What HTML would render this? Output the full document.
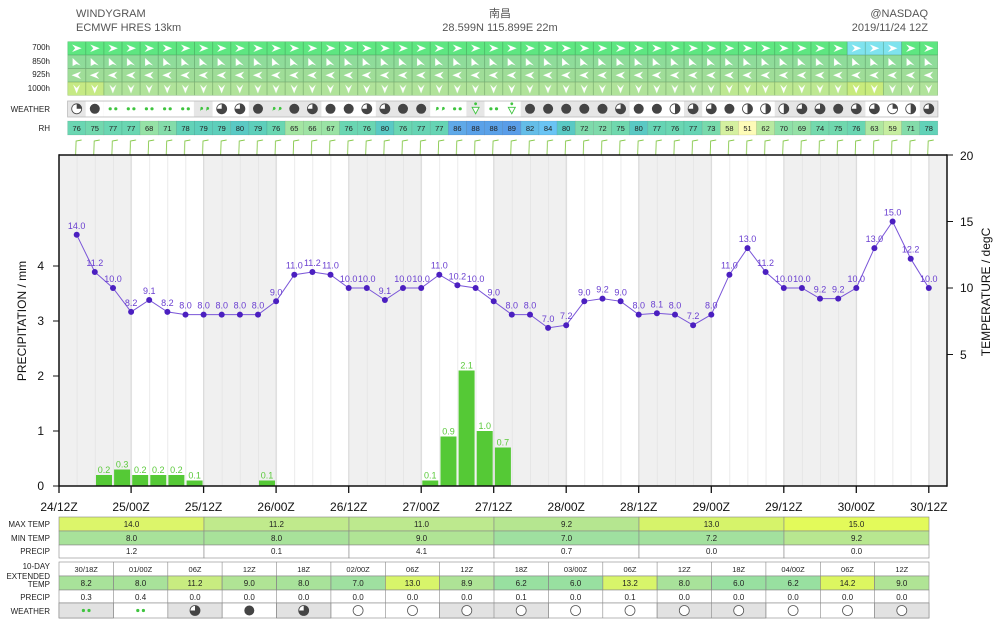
<!DOCTYPE html>
<html><head><meta charset="utf-8"><style>
html,body{margin:0;padding:0;background:#fff}
svg{display:block;font-family:"Liberation Sans","Noto Sans CJK SC",sans-serif}
</style></head><body>
<svg width="1000" height="625" viewBox="0 0 1000 625" xmlns="http://www.w3.org/2000/svg">
<defs>
<pattern id="vg" x="58.6" y="0" width="18.13" height="10" patternUnits="userSpaceOnUse"><line x1="0.3" y1="0" x2="0.3" y2="10" stroke="#e2e2e2" stroke-width="0.8"/></pattern>
<pattern id="cellgrid" x="67.6" y="41.5" width="18.13" height="13.5" patternUnits="userSpaceOnUse"><rect x="0" y="0" width="18.13" height="13.5" fill="none" stroke="rgba(40,90,50,0.35)" stroke-width="0.8"/></pattern>
<pattern id="a700" x="67.6" y="41.5" width="18.13" height="13.5" patternUnits="userSpaceOnUse"><path d="M4.5,3 L14,6.75 L4.5,10.5 L7.5,6.75Z" fill="#fff"/></pattern>
<pattern id="a850" x="67.6" y="55" width="18.13" height="13.5" patternUnits="userSpaceOnUse"><path d="M5,3 L13,10.5 L9,9 L5,11Z M5,3 L9,4" fill="#fff"/></pattern>
<pattern id="a925" x="67.6" y="68.5" width="18.13" height="13.5" patternUnits="userSpaceOnUse"><path d="M4,6.75 L13.5,3 L10.5,6.75 L13.5,10.5Z" fill="#fff"/></pattern>
<pattern id="a1000" x="67.6" y="82" width="18.13" height="13.5" patternUnits="userSpaceOnUse"><path d="M5.5,2.5 L9,11.5 L12.5,2.5 L9,6Z" fill="#fff"/></pattern>
<pattern id="barb" x="67.6" y="138" width="18.13" height="17" patternUnits="userSpaceOnUse"><path d="M8,17 L8.5,3 L14,2" fill="none" stroke="#86c84a" stroke-width="0.9"/></pattern>
<g id="wD"><circle r="5" fill="#444"/></g>
<g id="wH"><circle r="5" fill="#fff" stroke="#444" stroke-width="0.8"/><path d="M0,0 L0,-5 A5,5 0 1,1 -5,0Z" fill="#444"/></g>
<g id="wS"><circle r="5" fill="#fff" stroke="#444" stroke-width="0.8"/><path d="M0,-5 A5,5 0 0,1 0,5Z" fill="#444"/></g>
<g id="wP"><circle r="5" fill="#fff" stroke="#444" stroke-width="0.8"/><path d="M0,0 L0,-5 A5,5 0 0,1 5,0Z" fill="#444"/></g>
<g id="wR"><circle cx="-2.8" r="1.6" fill="#3fc43f"/><circle cx="2.8" r="1.6" fill="#3fc43f"/></g>
<g id="wQ"><path d="M-3,-1.5 a1.5,1.5 0 1,1 0.5,2.5 l-1,1.5Z M3,-1.5 a1.5,1.5 0 1,1 0.5,2.5 l-1,1.5Z" fill="#3fc43f"/></g>
<g id="wT"><circle cy="-5" r="1.4" fill="#3fc43f"/><path d="M-3.5,-1.5 L3.5,-1.5 L0,5Z" fill="#fff" stroke="#3fc43f" stroke-width="0.9"/></g>
<g id="wO"><circle r="5" fill="#fff" stroke="#555" stroke-width="0.8"/></g>
</defs>

<!-- header -->
<g fill="#555" font-size="11">
<text x="76" y="17">WINDYGRAM</text>
<text x="76" y="31">ECMWF HRES 13km</text>
<text x="500" y="17" text-anchor="middle">南昌</text>
<text x="500" y="31" text-anchor="middle">28.599N 115.899E 22m</text>
<text x="928" y="17" text-anchor="end">@NASDAQ</text>
<text x="928" y="31" text-anchor="end">2019/11/24 12Z</text>
</g>

<!-- left labels -->
<g fill="#222" font-size="8" text-anchor="end">
<text x="50" y="50">700h</text><text x="50" y="64">850h</text><text x="50" y="77">925h</text><text x="50" y="91">1000h</text>
<text x="50" y="112">WEATHER</text><text x="50" y="131">RH</text>
</g>

<!-- wind block -->
<rect x="67.6" y="41.5" width="870.3" height="13.5" fill="#5ee681"/>
<rect x="847.2" y="41.5" width="54.4" height="13.5" fill="#7fe3ee"/>
<rect x="67.6" y="55" width="870.3" height="13.5" fill="#8fdc9a"/>
<rect x="67.6" y="68.5" width="870.3" height="13.5" fill="#9fdd98"/>
<rect x="67.6" y="82" width="870.3" height="13.5" fill="#b0e39a"/>
<rect x="67.6" y="82" width="36" height="13.5" fill="#c6ea84"/>
<rect x="720" y="82" width="145" height="13.5" fill="#bde891"/>
<rect x="847.2" y="82" width="36" height="13.5" fill="#c8eb7c"/>
<rect x="67.6" y="41.5" width="870.3" height="13.5" fill="url(#a700)"/>
<rect x="67.6" y="55" width="870.3" height="13.5" fill="url(#a850)"/>
<rect x="67.6" y="68.5" width="870.3" height="13.5" fill="url(#a925)"/>
<rect x="67.6" y="82" width="870.3" height="13.5" fill="url(#a1000)"/>
<rect x="67.6" y="41.5" width="870.3" height="54" fill="url(#cellgrid)"/>

<!-- weather row -->
<rect x="67.6" y="101" width="870.3" height="16" fill="#e6e6e6" stroke="#bbb" stroke-width="0.8"/>
<g fill="#fff">
<rect x="85.7" y="101.5" width="18.1" height="15"/><rect x="103.9" y="101.5" width="90" height="15"/><rect x="212.6" y="101.5" width="36.2" height="15"/><rect x="321.4" y="101.5" width="54.4" height="15"/><rect x="430.2" y="101.5" width="36.2" height="15"/><rect x="484.5" y="101.5" width="36.2" height="15"/><rect x="629.6" y="101.5" width="54.4" height="15"/><rect x="702.2" y="101.5" width="72.5" height="15"/><rect x="865.4" y="101.5" width="54.4" height="15"/>
</g>
<g transform="translate(0,108.8)">
<use href="#wP" x="76.7"/><use href="#wD" x="94.8"/><use href="#wR" x="113.0"/><use href="#wR" x="131.1"/><use href="#wR" x="149.2"/><use href="#wR" x="167.4"/><use href="#wR" x="185.5"/><use href="#wQ" x="203.6"/><use href="#wH" x="221.7"/><use href="#wH" x="239.9"/><use href="#wD" x="258.0"/><use href="#wQ" x="276.1"/><use href="#wD" x="294.3"/><use href="#wH" x="312.4"/><use href="#wD" x="330.5"/><use href="#wD" x="348.7"/><use href="#wH" x="366.8"/><use href="#wH" x="384.9"/><use href="#wD" x="403.0"/><use href="#wD" x="421.2"/><use href="#wQ" x="439.3"/><use href="#wR" x="457.4"/><use href="#wT" x="475.6"/><use href="#wR" x="493.7"/><use href="#wT" x="511.8"/><use href="#wD" x="530.0"/><use href="#wD" x="548.1"/><use href="#wD" x="566.2"/><use href="#wD" x="584.3"/><use href="#wD" x="602.5"/><use href="#wH" x="620.6"/><use href="#wD" x="638.7"/><use href="#wD" x="656.9"/><use href="#wS" x="675.0"/><use href="#wH" x="693.1"/><use href="#wH" x="711.3"/><use href="#wD" x="729.4"/><use href="#wS" x="747.5"/><use href="#wS" x="765.6"/><use href="#wS" x="783.8"/><use href="#wH" x="801.9"/><use href="#wH" x="820.0"/><use href="#wD" x="838.2"/><use href="#wH" x="856.3"/><use href="#wH" x="874.4"/><use href="#wP" x="892.6"/><use href="#wS" x="910.7"/><use href="#wH" x="928.8"/>
</g>

<!-- RH row -->
<g stroke="rgba(0,0,0,0.15)" stroke-width="0.5">
<rect x="67.6" y="121" width="18.13" height="14" fill="#6ad6b2"/><rect x="85.7" y="121" width="18.13" height="14" fill="#72d8ae"/><rect x="103.9" y="121" width="18.13" height="14" fill="#6ad6b2"/><rect x="122.0" y="121" width="18.13" height="14" fill="#6ad6b2"/><rect x="140.1" y="121" width="18.13" height="14" fill="#96e2a6"/><rect x="158.3" y="121" width="18.13" height="14" fill="#84dcaa"/><rect x="176.4" y="121" width="18.13" height="14" fill="#62d2b8"/><rect x="194.5" y="121" width="18.13" height="14" fill="#5ecfbb"/><rect x="212.6" y="121" width="18.13" height="14" fill="#5ecfbb"/><rect x="230.8" y="121" width="18.13" height="14" fill="#5ac9c4"/><rect x="248.9" y="121" width="18.13" height="14" fill="#5ecfbb"/><rect x="267.0" y="121" width="18.13" height="14" fill="#6ad6b2"/><rect x="285.2" y="121" width="18.13" height="14" fill="#a4e5a2"/><rect x="303.3" y="121" width="18.13" height="14" fill="#9ee3a4"/><rect x="321.4" y="121" width="18.13" height="14" fill="#9ae3a5"/><rect x="339.6" y="121" width="18.13" height="14" fill="#6ad6b2"/><rect x="357.7" y="121" width="18.13" height="14" fill="#6ad6b2"/><rect x="375.8" y="121" width="18.13" height="14" fill="#5ac9c4"/><rect x="393.9" y="121" width="18.13" height="14" fill="#6ad6b2"/><rect x="412.1" y="121" width="18.13" height="14" fill="#66d4b4"/><rect x="430.2" y="121" width="18.13" height="14" fill="#66d4b4"/><rect x="448.3" y="121" width="18.13" height="14" fill="#5fa9e8"/><rect x="466.5" y="121" width="18.13" height="14" fill="#5aa1e8"/><rect x="484.6" y="121" width="18.13" height="14" fill="#5aa1e8"/><rect x="502.7" y="121" width="18.13" height="14" fill="#5a9de8"/><rect x="520.9" y="121" width="18.13" height="14" fill="#64bde8"/><rect x="539.0" y="121" width="18.13" height="14" fill="#6ac4f4"/><rect x="557.1" y="121" width="18.13" height="14" fill="#5ac9c4"/><rect x="575.2" y="121" width="18.13" height="14" fill="#7edaab"/><rect x="593.4" y="121" width="18.13" height="14" fill="#7edaab"/><rect x="611.5" y="121" width="18.13" height="14" fill="#70d8ae"/><rect x="629.6" y="121" width="18.13" height="14" fill="#5ac9c4"/><rect x="647.8" y="121" width="18.13" height="14" fill="#66d4b4"/><rect x="665.9" y="121" width="18.13" height="14" fill="#6ad6b2"/><rect x="684.0" y="121" width="18.13" height="14" fill="#66d4b4"/><rect x="702.2" y="121" width="18.13" height="14" fill="#78daac"/><rect x="720.3" y="121" width="18.13" height="14" fill="#d5f0a0"/><rect x="738.4" y="121" width="18.13" height="14" fill="#fdfbb8"/><rect x="756.5" y="121" width="18.13" height="14" fill="#b8e9a0"/><rect x="774.7" y="121" width="18.13" height="14" fill="#8ee0a8"/><rect x="792.8" y="121" width="18.13" height="14" fill="#94e1a6"/><rect x="810.9" y="121" width="18.13" height="14" fill="#74d9ad"/><rect x="829.1" y="121" width="18.13" height="14" fill="#70d8ae"/><rect x="847.2" y="121" width="18.13" height="14" fill="#6ad6b2"/><rect x="865.3" y="121" width="18.13" height="14" fill="#b0e7a0"/><rect x="883.5" y="121" width="18.13" height="14" fill="#c6eda0"/><rect x="901.6" y="121" width="18.13" height="14" fill="#84dcaa"/><rect x="919.7" y="121" width="18.13" height="14" fill="#62d2b8"/>
</g>
<g font-size="7.5" fill="#222" text-anchor="middle" transform="translate(0,131)">
<text x="76.7">76</text><text x="94.8">75</text><text x="113.0">77</text><text x="131.1">77</text><text x="149.2">68</text><text x="167.4">71</text><text x="185.5">78</text><text x="203.6">79</text><text x="221.7">79</text><text x="239.9">80</text><text x="258.0">79</text><text x="276.1">76</text><text x="294.3">65</text><text x="312.4">66</text><text x="330.5">67</text><text x="348.7">76</text><text x="366.8">76</text><text x="384.9">80</text><text x="403.0">76</text><text x="421.2">77</text><text x="439.3">77</text><text x="457.4">86</text><text x="475.6">88</text><text x="493.7">88</text><text x="511.8">89</text><text x="530.0">82</text><text x="548.1">84</text><text x="566.2">80</text><text x="584.3">72</text><text x="602.5">72</text><text x="620.6">75</text><text x="638.7">80</text><text x="656.9">77</text><text x="675.0">76</text><text x="693.1">77</text><text x="711.3">73</text><text x="729.4">58</text><text x="747.5">51</text><text x="765.6">62</text><text x="783.8">70</text><text x="801.9">69</text><text x="820.0">74</text><text x="838.2">75</text><text x="856.3">76</text><text x="874.4">63</text><text x="892.6">59</text><text x="910.7">71</text><text x="928.8">78</text>
</g>

<!-- barbs -->
<rect x="67.6" y="138" width="870.3" height="17" fill="url(#barb)"/>

<!-- chart background -->
<g fill="#f0f0f0">
<rect x="59" y="155" width="72.3" height="331"/><rect x="203.6" y="155" width="72.5" height="331"/><rect x="348.7" y="155" width="72.5" height="331"/><rect x="493.7" y="155" width="72.5" height="331"/><rect x="638.7" y="155" width="72.5" height="331"/><rect x="783.8" y="155" width="72.5" height="331"/><rect x="928.8" y="155" width="18.2" height="331"/>
</g>
<rect x="59" y="155" width="888" height="331" fill="url(#vg)"/>
<g stroke="#d8d8d8" stroke-width="1"><line x1="131.1" y1="155" x2="131.1" y2="486"/><line x1="203.6" y1="155" x2="203.6" y2="486"/><line x1="276.1" y1="155" x2="276.1" y2="486"/><line x1="348.7" y1="155" x2="348.7" y2="486"/><line x1="421.2" y1="155" x2="421.2" y2="486"/><line x1="493.7" y1="155" x2="493.7" y2="486"/><line x1="566.2" y1="155" x2="566.2" y2="486"/><line x1="638.7" y1="155" x2="638.7" y2="486"/><line x1="711.3" y1="155" x2="711.3" y2="486"/><line x1="783.8" y1="155" x2="783.8" y2="486"/><line x1="856.3" y1="155" x2="856.3" y2="486"/><line x1="928.8" y1="155" x2="928.8" y2="486"/></g>

<!-- bars -->
<g fill="#55c936">
<rect x="96" y="475" width="16" height="11"/><rect x="114.1" y="469.5" width="16" height="16.5"/><rect x="132.2" y="475" width="16" height="11"/><rect x="150.3" y="475" width="16" height="11"/><rect x="168.4" y="475" width="16" height="11"/><rect x="186.6" y="480.5" width="16" height="5.5"/><rect x="259" y="480.5" width="16" height="5.5"/><rect x="422.3" y="480.5" width="16" height="5.5"/><rect x="440.5" y="436.5" width="16" height="49.5"/><rect x="458.6" y="370.5" width="16" height="115.5"/><rect x="476.7" y="431" width="16" height="55"/><rect x="494.9" y="447.5" width="16" height="38.5"/>
</g>
<g fill="#5ac93a" font-size="9" text-anchor="middle">
<text x="104" y="473">0.2</text><text x="122.1" y="467.5">0.3</text><text x="140.2" y="473">0.2</text><text x="158.3" y="473">0.2</text><text x="176.4" y="473">0.2</text><text x="194.6" y="478.5">0.1</text><text x="267" y="478.5">0.1</text><text x="430.3" y="478.5">0.1</text><text x="448.5" y="434.5">0.9</text><text x="466.6" y="368.5">2.1</text><text x="484.7" y="429">1.0</text><text x="502.9" y="445.5">0.7</text>
</g>

<!-- temperature line -->
<polyline fill="none" stroke="#7a55d8" stroke-width="1" points="76.7,234.8 94.8,272 113,288 131.1,311.9 149.2,300 167.4,311.9 185.5,314.6 203.6,314.6 221.7,314.6 239.9,314.6 258,314.6 276.1,301.3 294.3,274.7 312.4,272 330.5,274.7 348.7,288 366.8,288 384.9,300 403,288 421.2,288 439.3,274.7 457.4,285.3 475.6,288 493.7,301.3 511.8,314.6 530,314.6 548.1,327.9 566.2,325.2 584.3,301.3 602.5,298.6 620.6,301.3 638.7,314.6 656.9,313.3 675,314.6 693.1,325.2 711.3,314.6 729.4,274.7 747.5,248.1 765.6,272 783.8,288 801.9,288 820,298.6 838.2,298.6 856.3,288 874.4,248.1 892.6,221.5 910.7,258.7 928.8,288"/>
<g fill="#4b1fc0">
<circle cx="76.7" cy="234.8" r="3"/><circle cx="94.8" cy="272" r="3"/><circle cx="113" cy="288" r="3"/><circle cx="131.1" cy="311.9" r="3"/><circle cx="149.2" cy="300" r="3"/><circle cx="167.4" cy="311.9" r="3"/><circle cx="185.5" cy="314.6" r="3"/><circle cx="203.6" cy="314.6" r="3"/><circle cx="221.7" cy="314.6" r="3"/><circle cx="239.9" cy="314.6" r="3"/><circle cx="258" cy="314.6" r="3"/><circle cx="276.1" cy="301.3" r="3"/><circle cx="294.3" cy="274.7" r="3"/><circle cx="312.4" cy="272" r="3"/><circle cx="330.5" cy="274.7" r="3"/><circle cx="348.7" cy="288" r="3"/><circle cx="366.8" cy="288" r="3"/><circle cx="384.9" cy="300" r="3"/><circle cx="403" cy="288" r="3"/><circle cx="421.2" cy="288" r="3"/><circle cx="439.3" cy="274.7" r="3"/><circle cx="457.4" cy="285.3" r="3"/><circle cx="475.6" cy="288" r="3"/><circle cx="493.7" cy="301.3" r="3"/><circle cx="511.8" cy="314.6" r="3"/><circle cx="530" cy="314.6" r="3"/><circle cx="548.1" cy="327.9" r="3"/><circle cx="566.2" cy="325.2" r="3"/><circle cx="584.3" cy="301.3" r="3"/><circle cx="602.5" cy="298.6" r="3"/><circle cx="620.6" cy="301.3" r="3"/><circle cx="638.7" cy="314.6" r="3"/><circle cx="656.9" cy="313.3" r="3"/><circle cx="675" cy="314.6" r="3"/><circle cx="693.1" cy="325.2" r="3"/><circle cx="711.3" cy="314.6" r="3"/><circle cx="729.4" cy="274.7" r="3"/><circle cx="747.5" cy="248.1" r="3"/><circle cx="765.6" cy="272" r="3"/><circle cx="783.8" cy="288" r="3"/><circle cx="801.9" cy="288" r="3"/><circle cx="820" cy="298.6" r="3"/><circle cx="838.2" cy="298.6" r="3"/><circle cx="856.3" cy="288" r="3"/><circle cx="874.4" cy="248.1" r="3"/><circle cx="892.6" cy="221.5" r="3"/><circle cx="910.7" cy="258.7" r="3"/><circle cx="928.8" cy="288" r="3"/>
</g>
<g fill="#6a3fd0" font-size="9" text-anchor="middle">
<text x="76.7" y="228.8">14.0</text><text x="94.8" y="266">11.2</text><text x="113" y="282">10.0</text><text x="131.1" y="305.9">8.2</text><text x="149.2" y="294">9.1</text><text x="167.4" y="305.9">8.2</text><text x="185.5" y="308.6">8.0</text><text x="203.6" y="308.6">8.0</text><text x="221.7" y="308.6">8.0</text><text x="239.9" y="308.6">8.0</text><text x="258" y="308.6">8.0</text><text x="276.1" y="295.3">9.0</text><text x="294.3" y="268.7">11.0</text><text x="312.4" y="266">11.2</text><text x="330.5" y="268.7">11.0</text><text x="348.7" y="282">10.0</text><text x="366.8" y="282">10.0</text><text x="384.9" y="294">9.1</text><text x="403" y="282">10.0</text><text x="421.2" y="282">10.0</text><text x="439.3" y="268.7">11.0</text><text x="457.4" y="279.3">10.2</text><text x="475.6" y="282">10.0</text><text x="493.7" y="295.3">9.0</text><text x="511.8" y="308.6">8.0</text><text x="530" y="308.6">8.0</text><text x="548.1" y="321.9">7.0</text><text x="566.2" y="319.2">7.2</text><text x="584.3" y="295.3">9.0</text><text x="602.5" y="292.6">9.2</text><text x="620.6" y="295.3">9.0</text><text x="638.7" y="308.6">8.0</text><text x="656.9" y="307.3">8.1</text><text x="675" y="308.6">8.0</text><text x="693.1" y="319.2">7.2</text><text x="711.3" y="308.6">8.0</text><text x="729.4" y="268.7">11.0</text><text x="747.5" y="242.1">13.0</text><text x="765.6" y="266">11.2</text><text x="783.8" y="282">10.0</text><text x="801.9" y="282">10.0</text><text x="820" y="292.6">9.2</text><text x="838.2" y="292.6">9.2</text><text x="856.3" y="282">10.0</text><text x="874.4" y="242.1">13.0</text><text x="892.6" y="215.5">15.0</text><text x="910.7" y="252.7">12.2</text><text x="928.8" y="282">10.0</text>
</g>

<!-- axes -->
<g stroke="#111" stroke-width="1.5" fill="none">
<line x1="59" y1="155" x2="947" y2="155"/>
<line x1="59" y1="154.3" x2="59" y2="486.7"/>
<line x1="947" y1="154.3" x2="947" y2="486.7"/>
<line x1="59" y1="486" x2="947" y2="486"/>
</g>
<g stroke="#111" stroke-width="1">
<line x1="53" y1="266" x2="59" y2="266"/><line x1="53" y1="321" x2="59" y2="321"/><line x1="53" y1="376" x2="59" y2="376"/><line x1="53" y1="431" x2="59" y2="431"/><line x1="53" y1="486" x2="59" y2="486"/>
<line x1="947" y1="155" x2="953" y2="155"/><line x1="947" y1="221.5" x2="953" y2="221.5"/><line x1="947" y1="288" x2="953" y2="288"/><line x1="947" y1="354.5" x2="953" y2="354.5"/>
</g>
<g stroke="#111" stroke-width="1.3">
<line x1="59" y1="486" x2="59" y2="493"/><line x1="131.1" y1="486" x2="131.1" y2="493"/><line x1="203.6" y1="486" x2="203.6" y2="493"/><line x1="276.1" y1="486" x2="276.1" y2="493"/><line x1="348.7" y1="486" x2="348.7" y2="493"/><line x1="421.2" y1="486" x2="421.2" y2="493"/><line x1="493.7" y1="486" x2="493.7" y2="493"/><line x1="566.2" y1="486" x2="566.2" y2="493"/><line x1="638.7" y1="486" x2="638.7" y2="493"/><line x1="711.3" y1="486" x2="711.3" y2="493"/><line x1="783.8" y1="486" x2="783.8" y2="493"/><line x1="856.3" y1="486" x2="856.3" y2="493"/><line x1="928.8" y1="486" x2="928.8" y2="493"/>
</g>
<g font-size="12" fill="#111">
<text x="44" y="270" text-anchor="end">4</text><text x="44" y="325" text-anchor="end">3</text><text x="44" y="380" text-anchor="end">2</text><text x="44" y="435" text-anchor="end">1</text><text x="44" y="490" text-anchor="end">0</text>
<text x="960" y="160">20</text><text x="960" y="226">15</text><text x="960" y="292">10</text><text x="960" y="359">5</text>
<text transform="translate(26,321) rotate(-90)" text-anchor="middle">PRECIPITATION / mm</text>
<text transform="translate(990,292) rotate(-90)" text-anchor="middle">TEMPERATURE / degC</text>
</g>
<g font-size="12" fill="#111" text-anchor="middle">
<text x="59" y="511">24/12Z</text><text x="131.1" y="511">25/00Z</text><text x="203.6" y="511">25/12Z</text><text x="276.1" y="511">26/00Z</text><text x="348.7" y="511">26/12Z</text><text x="421.2" y="511">27/00Z</text><text x="493.7" y="511">27/12Z</text><text x="566.2" y="511">28/00Z</text><text x="638.7" y="511">28/12Z</text><text x="711.3" y="511">29/00Z</text><text x="783.8" y="511">29/12Z</text><text x="856.3" y="511">30/00Z</text><text x="928.8" y="511">30/12Z</text>
</g>

<!-- summary table -->
<g font-size="8" fill="#222" text-anchor="end">
<text x="50" y="527">MAX TEMP</text><text x="50" y="541">MIN TEMP</text><text x="50" y="554">PRECIP</text>
<text x="50" y="569">10-DAY</text><text x="50" y="579">EXTENDED</text><text x="50" y="587">TEMP</text><text x="50" y="600">PRECIP</text><text x="50" y="614">WEATHER</text>
</g>
<g stroke="#888" stroke-width="0.6">
<rect x="59" y="517" width="145" height="14" fill="#dcf56a"/><rect x="204" y="517" width="145" height="14" fill="#c0ea8c"/><rect x="349" y="517" width="145" height="14" fill="#bde98e"/><rect x="494" y="517" width="145" height="14" fill="#b5e690"/><rect x="639" y="517" width="145" height="14" fill="#d6f36a"/><rect x="784" y="517" width="145" height="14" fill="#e3fa5a"/>
<rect x="59" y="531" width="145" height="14" fill="#a8e29a"/><rect x="204" y="531" width="145" height="14" fill="#a8e29a"/><rect x="349" y="531" width="145" height="14" fill="#b0e495"/><rect x="494" y="531" width="145" height="14" fill="#9fe0a0"/><rect x="639" y="531" width="145" height="14" fill="#a3e19e"/><rect x="784" y="531" width="145" height="14" fill="#b8e790"/>
<rect x="59" y="545" width="145" height="13" fill="#fff"/><rect x="204" y="545" width="145" height="13" fill="#fff"/><rect x="349" y="545" width="145" height="13" fill="#fff"/><rect x="494" y="545" width="145" height="13" fill="#fff"/><rect x="639" y="545" width="145" height="13" fill="#fff"/><rect x="784" y="545" width="145" height="13" fill="#fff"/>
</g>
<g font-size="8" fill="#222" text-anchor="middle">
<text x="131.5" y="527">14.0</text><text x="276.5" y="527">11.2</text><text x="421.5" y="527">11.0</text><text x="566.5" y="527">9.2</text><text x="711.5" y="527">13.0</text><text x="856.5" y="527">15.0</text>
<text x="131.5" y="541">8.0</text><text x="276.5" y="541">8.0</text><text x="421.5" y="541">9.0</text><text x="566.5" y="541">7.0</text><text x="711.5" y="541">7.2</text><text x="856.5" y="541">9.2</text>
<text x="131.5" y="554">1.2</text><text x="276.5" y="554">0.1</text><text x="421.5" y="554">4.1</text><text x="566.5" y="554">0.7</text><text x="711.5" y="554">0.0</text><text x="856.5" y="554">0.0</text>
</g>

<!-- extended table -->
<g stroke="#888" stroke-width="0.6">
<rect x="59" y="562" width="870" height="14" fill="#fff"/>
<rect x="59" y="576" width="54.4" height="14" fill="#a8e29a"/><rect x="113.4" y="576" width="54.4" height="14" fill="#a8e29a"/><rect x="167.8" y="576" width="54.4" height="14" fill="#c8ec80"/><rect x="222.1" y="576" width="54.4" height="14" fill="#b0e495"/><rect x="276.5" y="576" width="54.4" height="14" fill="#a8e29a"/><rect x="330.9" y="576" width="54.4" height="14" fill="#9fe0a0"/><rect x="385.3" y="576" width="54.4" height="14" fill="#d8f56a"/><rect x="439.6" y="576" width="54.4" height="14" fill="#aee396"/><rect x="494" y="576" width="54.4" height="14" fill="#98e0a0"/><rect x="548.4" y="576" width="54.4" height="14" fill="#98e0a0"/><rect x="602.8" y="576" width="54.4" height="14" fill="#d8f56a"/><rect x="657.1" y="576" width="54.4" height="14" fill="#a8e29a"/><rect x="711.5" y="576" width="54.4" height="14" fill="#98e0a0"/><rect x="765.9" y="576" width="54.4" height="14" fill="#98e0a0"/><rect x="820.3" y="576" width="54.4" height="14" fill="#dcf660"/><rect x="874.6" y="576" width="54.4" height="14" fill="#b0e495"/>
<rect x="59" y="590" width="870" height="13" fill="#fff"/>
<rect x="59" y="603" width="870" height="15" fill="#fff"/>
<rect x="59" y="603" width="54.4" height="15" fill="#e2e2e2"/><rect x="167.8" y="603" width="54.4" height="15" fill="#e2e2e2"/><rect x="276.5" y="603" width="54.4" height="15" fill="#e2e2e2"/><rect x="439.6" y="603" width="108.8" height="15" fill="#e2e2e2"/><rect x="657.1" y="603" width="108.8" height="15" fill="#e2e2e2"/><rect x="874.6" y="603" width="54.4" height="15" fill="#e2e2e2"/>
<line x1="113.4" y1="562" x2="113.4" y2="618"/><line x1="167.8" y1="562" x2="167.8" y2="618"/><line x1="222.1" y1="562" x2="222.1" y2="618"/><line x1="276.5" y1="562" x2="276.5" y2="618"/><line x1="330.9" y1="562" x2="330.9" y2="618"/><line x1="385.3" y1="562" x2="385.3" y2="618"/><line x1="439.6" y1="562" x2="439.6" y2="618"/><line x1="494" y1="562" x2="494" y2="618"/><line x1="548.4" y1="562" x2="548.4" y2="618"/><line x1="602.8" y1="562" x2="602.8" y2="618"/><line x1="657.1" y1="562" x2="657.1" y2="618"/><line x1="711.5" y1="562" x2="711.5" y2="618"/><line x1="765.9" y1="562" x2="765.9" y2="618"/><line x1="820.3" y1="562" x2="820.3" y2="618"/><line x1="874.6" y1="562" x2="874.6" y2="618"/>
</g>
<g font-size="7.5" fill="#222" text-anchor="middle">
<g transform="translate(0,572)"><text x="86.2">30/18Z</text><text x="140.6">01/00Z</text><text x="195">06Z</text><text x="249.3">12Z</text><text x="303.7">18Z</text><text x="358.1">02/00Z</text><text x="412.5">06Z</text><text x="466.8">12Z</text><text x="521.2">18Z</text><text x="575.6">03/00Z</text><text x="630">06Z</text><text x="684.3">12Z</text><text x="738.7">18Z</text><text x="793.1">04/00Z</text><text x="847.5">06Z</text><text x="901.8">12Z</text></g>
<g transform="translate(0,586)" font-size="8"><text x="86.2">8.2</text><text x="140.6">8.0</text><text x="195">11.2</text><text x="249.3">9.0</text><text x="303.7">8.0</text><text x="358.1">7.0</text><text x="412.5">13.0</text><text x="466.8">8.9</text><text x="521.2">6.2</text><text x="575.6">6.0</text><text x="630">13.2</text><text x="684.3">8.0</text><text x="738.7">6.0</text><text x="793.1">6.2</text><text x="847.5">14.2</text><text x="901.8">9.0</text></g>
<g transform="translate(0,600)" font-size="8"><text x="86.2">0.3</text><text x="140.6">0.4</text><text x="195">0.0</text><text x="249.3">0.0</text><text x="303.7">0.0</text><text x="358.1">0.0</text><text x="412.5">0.0</text><text x="466.8">0.0</text><text x="521.2">0.1</text><text x="575.6">0.0</text><text x="630">0.1</text><text x="684.3">0.0</text><text x="738.7">0.0</text><text x="793.1">0.0</text><text x="847.5">0.0</text><text x="901.8">0.0</text></g>
</g>
<g transform="translate(0,610.5)">
<use href="#wR" x="86.2"/><use href="#wR" x="140.6"/><use href="#wH" x="195"/><use href="#wD" x="249.3"/><use href="#wH" x="303.7"/><use href="#wO" x="358.1"/><use href="#wO" x="412.5"/><use href="#wO" x="466.8"/><use href="#wO" x="521.2"/><use href="#wO" x="575.6"/><use href="#wO" x="630"/><use href="#wO" x="684.3"/><use href="#wO" x="738.7"/><use href="#wO" x="793.1"/><use href="#wO" x="847.5"/><use href="#wO" x="901.8"/>
</g>
</svg>
</body></html>
